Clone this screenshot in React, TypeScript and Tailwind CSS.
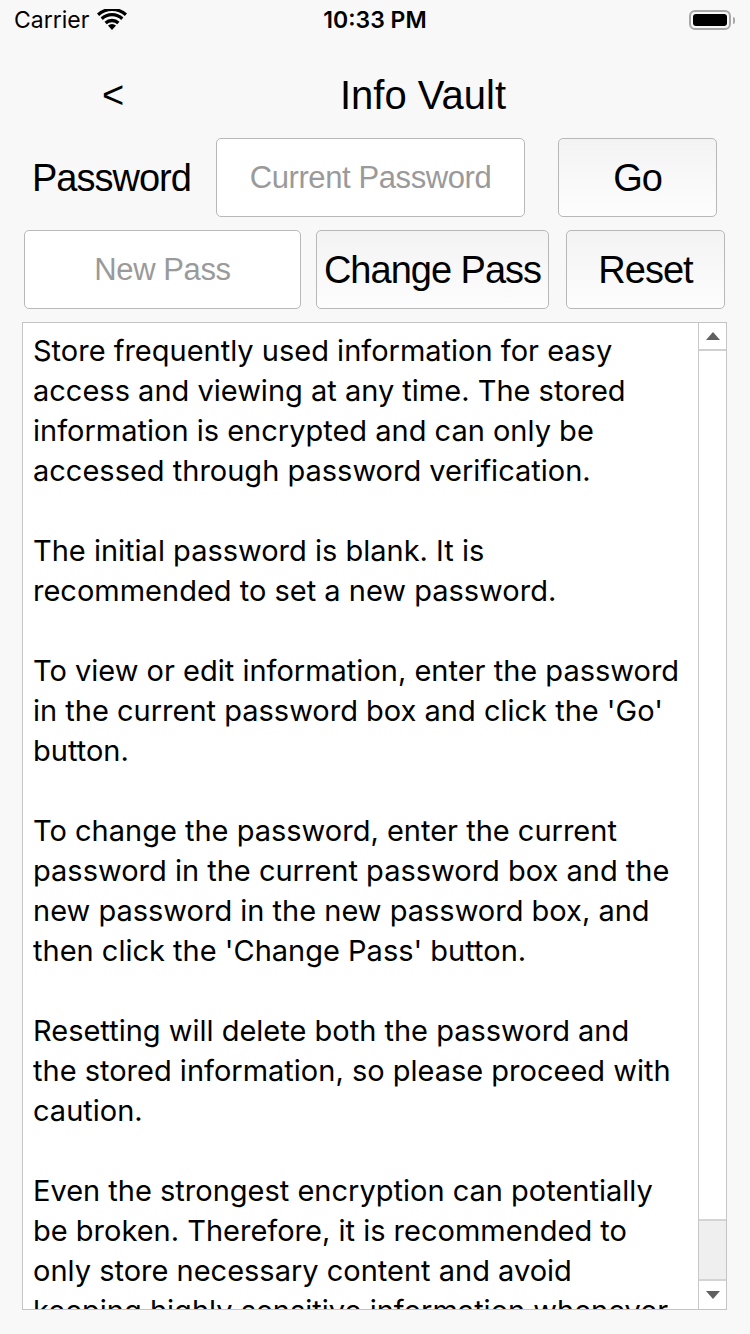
import React from "react";

const lines: string[] = [
  "Store frequently used information for easy",
  "access and viewing at any time. The stored",
  "information is encrypted and can only be",
  "accessed through password verification.",
  "",
  "The initial password is blank. It is",
  "recommended to set a new password.",
  "",
  "To view or edit information, enter the password",
  "in the current password box and click the 'Go'",
  "button.",
  "",
  "To change the password, enter the current",
  "password in the current password box and the",
  "new password in the new password box, and",
  "then click the 'Change Pass' button.",
  "",
  "Resetting will delete both the password and",
  "the stored information, so please proceed with",
  "caution.",
  "",
  "Even the strongest encryption can potentially",
  "be broken. Therefore, it is recommended to",
  "only store necessary content and avoid",
  "keeping highly sensitive information whenever",
];

function StatusBar() {
  return (
    <div className="flex h-[40px] items-center justify-between px-[14px] font-['Inter',sans-serif] text-[23px] text-black">
      <div className="flex w-[200px] items-center gap-[8px]">
        <span>Carrier</span>
        <svg width="30" height="22" viewBox="0 0 30 22">
          <path d="M15 21 L11 16.5 A6 6 0 0 1 19 16.5 Z" fill="black" />
          <path d="M7.5 12.8 A11 11 0 0 1 22.5 12.8 L20.3 15.2 A8 8 0 0 0 9.7 15.2 Z" fill="black" />
          <path d="M3.6 8.6 A16.5 16.5 0 0 1 26.4 8.6 L24.2 11 A13.3 13.3 0 0 0 5.8 11 Z" fill="black" />
          <path d="M0 4.6 A22 22 0 0 1 30 4.6 L27.8 7 A19 19 0 0 0 2.2 7 Z" fill="black" />
        </svg>
      </div>
      <span className="font-semibold">10:33 PM</span>
      <div className="flex w-[200px] items-center justify-end pr-[1px]">
        <div className="flex h-[20px] w-[42px] items-center rounded-[6px] border-[2px] border-[#a8a8a8] p-[2px]">
          <div className="h-full w-full rounded-[3px] bg-black" />
        </div>
        <div className="ml-[2px] h-[7px] w-[2px] rounded-r-[2px] bg-[#a8a8a8]" />
      </div>
    </div>
  );
}

export default function App() {
  const head = "font-['Liberation_Sans',Arial,sans-serif] text-[38px] tracking-[-1px]";
  const hint = "text-[31px] tracking-[-0.4px] text-[#9a9a9a]";
  const box = "flex h-[79px] items-center justify-center rounded-[5px] border-[1.5px] border-[#b8b8b8] pt-[2px]";
  const btn = `${box} bg-linear-to-b from-[#f3f3f3] to-[#fdfdfd]`;
  return (
    <div className="h-[1334px] w-[750px] overflow-hidden bg-[#f8f8f8]">
      <StatusBar />
      <div className={`flex h-[98px] items-center pt-[12px] ${head}`}>
        <span className="ml-[102px] w-[30px] text-[38px]">&lt;</span>
        <span className="ml-[208px] text-[40px] tracking-normal">Info Vault</span>
      </div>

      <div className={`flex h-[79px] items-center ${head}`}>
        <span className="w-[216px] shrink-0 pl-[32px] pt-[2px]">Password</span>
        <div className={`${box} w-[309px] bg-white ${hint}`}>Current Password</div>
        <button className={`${btn} ml-[33px] w-[159px]`}>Go</button>
      </div>

      <div className={`mt-[13px] flex h-[79px] items-center pl-[24px] ${head}`}>
        <div className={`${box} w-[277px] bg-white ${hint}`}>New Pass</div>
        <button className={`${btn} ml-[15px] w-[233px]`}>Change Pass</button>
        <button className={`${btn} ml-[17px] w-[159px]`}>Reset</button>
      </div>

      <div className="ml-[22px] mt-[13px] flex h-[988px] w-[705px] border border-[#c4c4c4] bg-white">
        <div className="flex-1 overflow-hidden pl-[10px] pt-[8px] font-['Inter',sans-serif] text-[29px] leading-[40px] text-black">
          {lines.map((l, i) => (
            <div key={i} className="h-[40px] whitespace-nowrap">
              {l}
            </div>
          ))}
        </div>
        <div className="flex w-[28px] flex-col border-l border-[#c8c8c8] bg-white">
          <div className="flex h-[28px] items-center justify-center border-b-[2px] border-[#d0d0d0]">
            <svg width="16" height="10" viewBox="0 0 16 10">
              <path d="M8 1 L15 9 L1 9 Z" fill="#606060" />
            </svg>
          </div>
          <div className="flex-1" />
          <div className="h-[62px] border-y-[2px] border-[#d4d4d4] bg-[#efefef]" />
          <div className="flex h-[28px] items-center justify-center">
            <svg width="16" height="10" viewBox="0 0 16 10">
              <path d="M1 1 L15 1 L8 9 Z" fill="#606060" />
            </svg>
          </div>
        </div>
      </div>
    </div>
  );
}
